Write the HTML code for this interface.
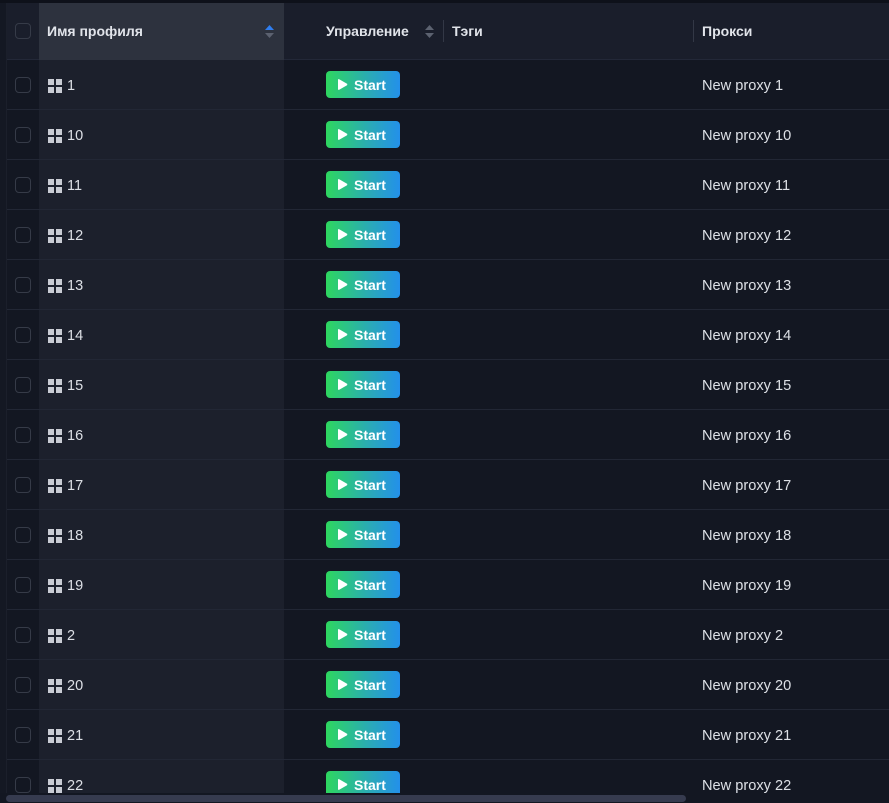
<!DOCTYPE html><html><head><meta charset="utf-8"><style>
*{margin:0;padding:0;box-sizing:border-box}
html,body{width:889px;height:803px;overflow:hidden}
body{background:#131722;font-family:"Liberation Sans",sans-serif;position:relative}
.top{position:absolute;left:0;top:0;width:889px;height:3px;background:#0e111a}
.lstrip{position:absolute;left:0;top:3px;width:7px;height:800px;background:#141823;border-right:1px solid #1b1f2b}
.hdr{position:absolute;left:7px;top:3px;width:882px;height:57px;background:#1a1e2b;border-bottom:1px solid #232838}
.namecol{position:absolute;left:39px;top:3px;width:245px;height:790px;background:#1c202c}
.namehdr{position:absolute;left:39px;top:3px;width:245px;height:57px;background:#2d323e}
.h{position:absolute;top:23px;font-size:14px;font-weight:bold;color:#e1e4ea}
.cb{position:absolute;left:15px;width:16px;height:16px;border:1px solid #363b48;border-radius:4px}
.row{position:absolute;left:7px;width:882px;height:50px;border-bottom:1px solid #222735}
.ic{position:absolute;left:48px;width:14px;height:14px}
.ic i{position:absolute;width:6px;height:6px;background:#c9ccd4}
.num{position:absolute;left:67px;font-size:14.5px;color:#dde0e6}
.btn{position:absolute;left:326px;width:74px;height:27px;border-radius:4px;background:linear-gradient(90deg,#2ed75f,#2aa9b8 60%,#2390ea);color:#fff;font-size:14px;font-weight:bold}
.btn span{position:absolute;left:28px;top:6px}
.btn svg{position:absolute;left:11px;top:7px}
.px{position:absolute;left:702px;font-size:14.6px;color:#dde0e6}
.sep{position:absolute;top:20px;width:1px;height:22px;background:#333846}
.sb{position:absolute;left:6px;top:795px;width:680px;height:7px;border-radius:4px;background:#363b4f}
</style></head><body>
<div class="top"></div>
<div class="namecol"></div>
<div class="hdr"></div>
<div class="namehdr"></div>
<div class="lstrip"></div>
<div class="cb" style="top:23px"></div>
<div class="h" style="left:47px">Имя профиля</div>
<svg style="position:absolute;left:265px;top:25px" width="9" height="13"><path d="M4.5 0L9 5H0z" fill="#2f7ef0"/><path d="M4.5 13L9 8H0z" fill="#5c6270"/></svg>
<div class="h" style="left:326px">Управление</div>
<svg style="position:absolute;left:425px;top:25px" width="9" height="13"><path d="M4.5 0L9 5H0z" fill="#5c6270"/><path d="M4.5 13L9 8H0z" fill="#5c6270"/></svg>
<div class="sep" style="left:443px"></div>
<div class="h" style="left:452px">Тэги</div>
<div class="sep" style="left:693px"></div>
<div class="h" style="left:702px">Прокси</div>
<div id="rows"></div>
<script>
var n=['1','10','11','12','13','14','15','16','17','18','19','2','20','21','22'],h='';
n.forEach(function(v,i){var y=60+i*50;
h+='<div class="row" style="top:'+y+'px"></div><div class="cb" style="top:'+(y+17)+'px"></div>'+
'<div class="ic" style="top:'+(y+19)+'px"><i style="left:0;top:0"></i><i style="left:8px;top:0"></i><i style="left:0;top:8px"></i><i style="left:8px;top:8px"></i></div>'+
'<div class="num" style="top:'+(y+18)+'px">'+v+'</div>'+
'<div class="btn" style="top:'+(y+11)+'px"><svg width="11" height="13"><path d="M2.2 1.2Q1 0.6 1 2.2V10.8Q1 12.4 2.2 11.8L9.8 7.4Q10.8 6.5 9.8 5.6Z" fill="#fff"/></svg><span>Start</span></div>'+
'<div class="px" style="top:'+(y+18)+'px">New proxy '+v+'</div>';});
document.getElementById('rows').innerHTML=h;
</script>
<div style="position:absolute;left:0;top:793px;width:889px;height:10px;background:#131722"></div>
<div class="sb"></div>
</body></html>
